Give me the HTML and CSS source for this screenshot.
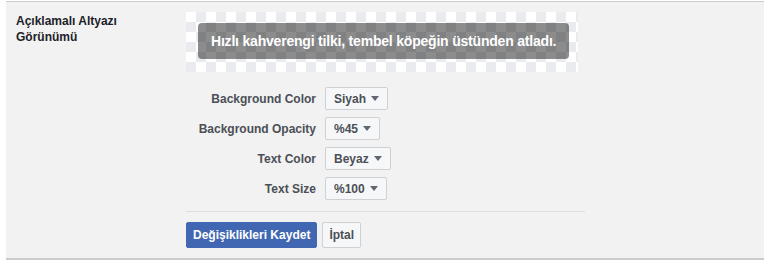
FILE: index.html
```html
<!DOCTYPE html>
<html lang="tr">
<head>
  <meta charset="UTF-8" />
  <meta name="viewport" content="width=device-width, initial-scale=1" />
  <title>Açıklamalı Altyazı Görünümü</title>
  <link rel="stylesheet" href="styles.css">
</head>
<body>
  <div class="panel">
    <div class="section-label">Açıklamalı Altyazı<br>Görünümü</div>

    <div class="section-body">
      <div class="preview">
        <div class="caption">Hızlı kahverengi tilki, tembel köpeğin üstünden atladı.</div>
      </div>

      <div class="settings">
        <div class="row">
          <label>Background Color</label>
          <button class="select" type="button">Siyah <span class="arrow"></span></button>
        </div>
        <div class="row">
          <label>Background Opacity</label>
          <button class="select" type="button">%45 <span class="arrow"></span></button>
        </div>
        <div class="row">
          <label>Text Color</label>
          <button class="select" type="button">Beyaz <span class="arrow"></span></button>
        </div>
        <div class="row">
          <label>Text Size</label>
          <button class="select" type="button">%100 <span class="arrow"></span></button>
        </div>
      </div>

      <div class="actions">
        <button class="btn btn-primary" type="button">Değişiklikleri Kaydet</button>
        <button class="btn" type="button">İptal</button>
      </div>
    </div>
  </div>
</body>
</html>
```

FILE: styles.css
```css
* {
  box-sizing: border-box;
}

body {
  margin: 0;
  background: #ffffff;
  font-family: 'Liberation Sans', Helvetica, Arial, sans-serif;
  font-size: 12px;
  color: #1d2129;
}

.panel {
  margin: 1px 0 0 6px;
  width: 758px;
  background: #f2f2f2;
  border-top: 1px solid #cccccc;
  border-bottom: 2px solid #cccccc;
  padding: 10px 0 0 10px;
  display: flex;
}

.section-label {
  width: 170px;
  font-weight: 700;
  line-height: 16px;
  padding-top: 1px;
  color: #1d2129;
}

.section-body {
  width: 399px;
}

.preview {
  width: 392px;
  height: 60px;
  padding: 11px 12px;
  background-color: #ffffff;
  background-image: conic-gradient(#e9ebee 25%, #ffffff 0 50%, #e9ebee 0 75%, #ffffff 0);
  background-size: 20px 20px;
}

.caption {
  display: inline-block;
  height: 36px;
  line-height: 36px;
  padding: 0 13px;
  border-radius: 4px;
  background: rgba(0, 0, 0, 0.45);
  color: #ffffff;
  font-size: 14px;
  font-weight: 700;
  letter-spacing: -0.2px;
  white-space: nowrap;
}

.settings {
  margin: 15px 0 11px;
  display: flex;
  flex-direction: column;
  gap: 7px;
}

.row {
  display: grid;
  grid-template-columns: 130px auto;
  column-gap: 9px;
  align-items: center;
}

.row label {
  text-align: right;
  font-weight: 700;
  color: #4b4f56;
}

.select {
  justify-self: start;
  height: 23px;
  padding: 0 8px;
  display: flex;
  align-items: center;
  gap: 5px;
  background: #f6f7f9;
  border: 1px solid #ced0d4;
  border-radius: 2px;
  font-family: inherit;
  font-size: 12px;
  font-weight: 700;
  color: #4b4f56;
}

.arrow {
  width: 0;
  height: 0;
  border-left: 4px solid transparent;
  border-right: 4px solid transparent;
  border-top: 5px solid #606770;
}

.actions {
  border-top: 1px solid #dddfe2;
  padding: 10px 0;
  display: flex;
  gap: 5px;
}

.btn {
  height: 26px;
  padding: 0 6px;
  background: #f6f7f9;
  border: 1px solid #ced0d4;
  border-radius: 2px;
  font-family: inherit;
  font-size: 12px;
  font-weight: 700;
  color: #4b4f56;
}

.btn-primary {
  background: #4267b2;
  border-color: #4267b2;
  color: #ffffff;
}
```
